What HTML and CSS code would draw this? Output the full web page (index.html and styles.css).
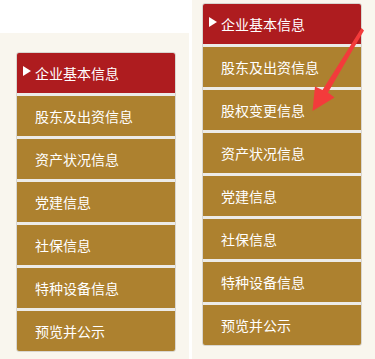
FILE: index.html
```html
<!DOCTYPE html>
<html lang="zh">
<head>
<meta charset="utf-8">
<link rel="stylesheet" href="styles.css">
</head>
<body>
<div class="page">
  <section class="shot shot-left">
    <div class="shot-top"></div>
    <div class="shot-body">
      <ul class="menu">
        <li class="item active">企业基本信息</li>
        <li class="item">股东及出资信息</li>
        <li class="item">资产状况信息</li>
        <li class="item">党建信息</li>
        <li class="item">社保信息</li>
        <li class="item">特种设备信息</li>
        <li class="item">预览并公示</li>
      </ul>
    </div>
  </section>
  <section class="shot shot-right">
    <div class="shot-body">
      <ul class="menu">
        <li class="item active">企业基本信息</li>
        <li class="item">股东及出资信息</li>
        <li class="item">股权变更信息</li>
        <li class="item">资产状况信息</li>
        <li class="item">党建信息</li>
        <li class="item">社保信息</li>
        <li class="item">特种设备信息</li>
        <li class="item">预览并公示</li>
      </ul>
    </div>
  </section>
  <svg class="arrow" width="375" height="359" viewBox="0 0 375 359">
    <polygon points="361.5,28 364,30.5 328,92.5 334.5,97.5 312.5,111 315,86.5 322.5,90" fill="#f33b3b"/>
  </svg>
</div>
</body>
</html>
```
FILE: styles.css
```css
html, body {
  margin: 0;
  padding: 0;
  background: #ffffff;
}
.page {
  position: relative;
  width: 375px;
  height: 359px;
  display: flex;
  gap: 3px;
  overflow: hidden;
  font-family: "Noto Sans CJK SC", "Microsoft YaHei", sans-serif;
}
.shot {
  display: flex;
  flex-direction: column;
}
.shot-left {
  width: 189px;
}
.shot-right {
  width: 183px;
}
.shot-top {
  height: 33px;
  background: #ffffff;
}
.shot-body {
  flex: 1;
  background: #f9f6ee;
}
.shot-left .shot-body {
  padding: 19px 0 0 16px;
}
.shot-right .shot-body {
  padding: 3px 0 0 10px;
}
.menu {
  list-style: none;
  margin: 0;
  padding: 0;
  width: 158px;
  border: 1px solid #d9d6d0;
  border-radius: 3px;
  background: #ecebe8;
  display: flex;
  flex-direction: column;
  gap: 3px;
  overflow: hidden;
}
.item {
  position: relative;
  height: 40px;
  line-height: 40px;
  padding-left: 18px;
  background: #ad812f;
  color: #ffffff;
  font-size: 14px;
  white-space: nowrap;
}
.item.active {
  background: #ae1c1f;
}
.item.active::before {
  content: "";
  position: absolute;
  left: 6px;
  top: 13px;
  width: 0;
  height: 0;
  border-left: 8px solid #ffffff;
  border-top: 5px solid transparent;
  border-bottom: 5px solid transparent;
}
.arrow {
  position: absolute;
  left: 0;
  top: 0;
  pointer-events: none;
}
```
